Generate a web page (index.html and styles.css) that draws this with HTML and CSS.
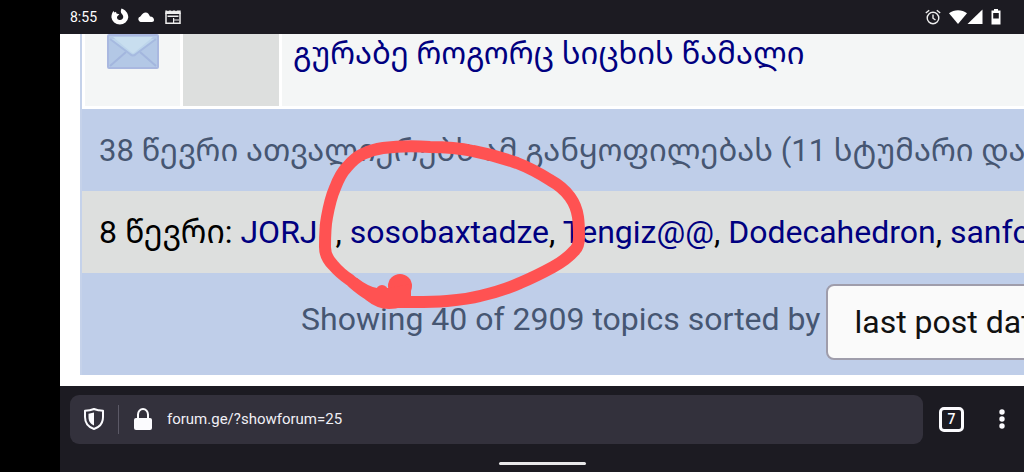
FILE: index.html
```html
<!DOCTYPE html>
<html lang="ka">
  <head>
    <meta charset="UTF-8" />
    <meta name="viewport" content="width=device-width, initial-scale=1.0" />
    <title>forum.ge</title>
    <link rel="stylesheet" href="styles.css">
  </head>
  <body>
    <div class="screen">
      <header class="status-bar">
        <span class="clock">8:55</span>
        <svg class="status-firefox" width="18" height="18" viewBox="0 0 18 18">
          <path fill="#fff" fill-rule="evenodd" d="M10.500 .5C14 1.700 17.300 4.800 17.300 9.300A8.500 8.200 0 0 1 .4 9.300C.4 6.700 1.300 4.500 2.400 3L3.500 4.600L5 3.800L5.500 5.600L8.400 6.300L6.600 8C5.300 9.500 6.300 12 9 12C12.500 12 13.300 8 10.700 5.800C9.600 4.500 9.500 2.500 10.500 .5Z" />
        </svg>
        <svg class="status-cloud" width="18" height="18" viewBox="0 0 18 18">
          <path fill="#fff" d="M3.500 14A3 3 0 0 1 2 9.300C4 9 5 4.500 8.500 4.500C11 4.500 12.300 6.700 13 8.600C17.500 8.600 18.400 14 14.800 14Z" />
        </svg>
        <svg class="status-news" width="16" height="16" viewBox="0 0 16 16">
          <path fill="none" stroke="#eee" stroke-width="1.500" d="M1 3.500V14.200H15V3.500" />
          <path fill="#eee" d="M.3 1.500H2L3 2.300L4 1.500H6L7 2.300L8 1.500H10L11 2.300L12 1.500H15.700V5H.3ZM2.500 6.500H13.500V8H2.500ZM8 9H9.200V14H8ZM9.200 10.500H14V11.600H9.200Z" />
        </svg>
        <span class="spacer"></span>
        <svg class="status-alarm" width="16" height="16" viewBox="0 0 16 16">
          <circle cx="8" cy="9" r="5.800" fill="none" stroke="#eee" stroke-width="1.400" />
          <path fill="none" stroke="#eee" stroke-width="1.400" d="M.8 4L4.200 1.200M15.200 4L11.800 1.200M8 5.500V9.200L10.500 11" />
        </svg>
        <svg class="status-wifi" width="18" height="16" viewBox="0 0 18 16">
          <path fill="#fff" d="M0 4.200C5 .2 13 .2 18 4.200L9 15Z" />
        </svg>
        <svg class="status-signal" width="16" height="16" viewBox="0 0 16 16">
          <path fill="#fff" d="M15.500 .5V15H.5Z" />
        </svg>
        <svg class="status-battery" width="10" height="16" viewBox="0 0 10 16">
          <path fill="#fff" fill-rule="evenodd" d="M3 0H7V1.500H9.500V15.500H.5V1.500H3ZM2.200 4V9.500H7.800V4Z" />
        </svg>
      </header>

      <main class="page">
        <div class="forum">
          <table class="topics">
            <tr>
              <td class="topic-status">
                <svg width="52" height="36" viewBox="0 0 52 36">
                  <rect x="1" y="1" width="50" height="33" rx="1" fill="#b3c8e6" stroke="#a9b8e0" stroke-width="2" />
                  <path fill="none" stroke="#a3b6de" stroke-width="2" d="M3 32L19 18M49 32L33 18" />
                  <path fill="#bdd5eb" stroke="#a6bae0" stroke-width="2" d="M3 5L23 20Q26 23 29 20L49 5" />
                  <path fill="#c8deef" d="M6 3H46L28 18Q26 20 24 18Z" />
                </svg>
              </td>
              <td class="topic-icon"></td>
              <td class="topic-title"><a href="#">გურაბე როგორც სიცხის წამალი</a></td>
            </tr>
          </table>
          <div class="viewers">38 წევრი ათვალიერებს ამ განყოფილებას (11 სტუმარი და</div>
          <div class="members">
            8 წევრი: <a href="#">JORJ1</a>, <a href="#">sosobaxtadze</a>, <a href="#">Tengiz@@</a>, <a href="#">Dodecahedron</a>, <a href="#">sanfo</a>
          </div>
          <form class="sorting">
            <label for="sort">Showing 40 of 2909 topics sorted by</label>
            <select id="sort">
              <option>last post date</option>
            </select>
          </form>
        </div>

        <!-- red pen mark around the member name -->
        <svg class="pen-mark" width="270" height="170" viewBox="0 0 270 170">
          <path fill="none" stroke="#ff5252" stroke-width="12" stroke-linejoin="round" d="M70 156C64 155 60 153 53 149C44 144 40 140 33 134C27 130 21 125 16 119C10 113 8 108 8 101C8 90 8 81 10 71C12 60 14 51 18 42C21 34 24 27 30 21C35 15 39 11 46 8C52 5 58 3 66 2C82 0 98 0 113 1C128 1 142 2 156 5C172 8 186 12 200 17C213 22 222 27 233 34C242 39 248 44 253 51C258 58 260 64 261 71C262 78 262 84 262 91C262 97 261 101 258 104C252 111 245 116 236 121C225 127 215 132 203 137C190 143 176 147 163 150C152 153 141 154 130 155C118 156 107 156 96 156Z" />
          <circle cx="83" cy="140" r="12" fill="#ff5252" />
          <circle cx="65" cy="145" r="6" fill="#ff5252" />
          <path fill="#ff5252" d="M40 132Q52 141 60 142L72 142L94 138L94 156Q86 163 72 163Q60 163 49 154L36 138Z" />
        </svg>
      </main>

      <footer class="browser-bar">
        <div class="toolbar">
          <div class="address">
            <button class="icon-button shield" aria-label="Tracking protection">
              <svg width="20" height="22" viewBox="0 0 20 22">
                <path fill="none" stroke="#fbfbfe" stroke-width="2" stroke-linejoin="round" d="M10 1Q14 2.500 19 2.800V9C19 15 16 19 10 21C4 19 1 15 1 9V2.800Q6 2.500 10 1Z" />
                <path fill="#fbfbfe" d="M10 4.500V17.500C6 15.500 4.500 13 4.500 9V5.700Z" />
              </svg>
            </button>
            <button class="icon-button lock" aria-label="Site information">
              <svg width="18" height="22" viewBox="0 0 18 22">
                <rect x="0" y="10" width="18" height="12" rx="2" fill="#fbfbfe" />
                <path fill="none" stroke="#fbfbfe" stroke-width="2" d="M4 11V6.500A5 5.500 0 0 1 14 6.500V11" />
              </svg>
            </button>
            <input class="url" type="text" aria-label="Address" value="forum.ge/?showforum=25" />
          </div>
          <button class="tabs" aria-label="Open tabs">7</button>
          <button class="icon-button" aria-label="Menu">
            <svg width="6" height="20" viewBox="0 0 6 20">
              <g fill="#fbfbfe">
                <circle cx="3" cy="3" r="2.700" />
                <circle cx="3" cy="10" r="2.700" />
                <circle cx="3" cy="17" r="2.700" />
              </g>
            </svg>
          </button>
        </div>
        <div class="home-handle"></div>
      </footer>
    </div>
  </body>
</html>
```
FILE: styles.css
```css
* {
  box-sizing: border-box;
}

body {
  margin: 0;
  background: #000;
  font-family: Roboto, "Noto Sans Georgian", "Noto Sans", "DejaVu Sans", sans-serif;
  overflow: hidden;
}

a {
  color: #000080;
  text-decoration: none;
}

button {
  font-family: inherit;
  cursor: pointer;
}

.screen {
  display: flex;
  flex-direction: column;
  min-height: 100vh;
  margin-left: 60px;
  background: #1c1b22;
}

.status-bar {
  display: flex;
  align-items: center;
  height: 34px;
  padding: 0 23px 0 10px;
  color: #fff;
}

.clock {
  width: 41px;
  font-size: 14px;
}

.status-cloud {
  margin-left: 8px;
}

.status-news {
  margin-left: 10px;
}

.spacer {
  flex: 1;
}

.status-wifi {
  margin-left: 8px;
}

.status-battery {
  margin-left: 8px;
}

.page {
  position: relative;
  padding: 0 0 11px 20px;
  background: #fff;
  overflow: hidden;
}

.forum {
  border-left: 2px solid #c5d2ea;
  font-size: 32px;
  line-height: 38px;
  white-space: nowrap;
}

.topics {
  width: 100%;
  table-layout: fixed;
  border-collapse: collapse;
}

.topics td {
  height: 73px;
  padding: 0;
  vertical-align: top;
  background: #f4f6f6;
  border: 3px solid #fff;
  border-top: 0;
  border-right: 0;
}

.topics .topic-status {
  width: 98px;
  text-align: center;
}

.topic-status svg {
  display: block;
  margin: 0 auto;
}

.topics .topic-icon {
  width: 99px;
  background: #dddfde;
}

.topics .topic-title {
  padding-left: 11px;
  font-size: 31px;
  line-height: 40px;
}

.viewers,
.members {
  padding: 22px 0 22px 17px;
}

.viewers {
  padding-bottom: 20px;
  background: #bfcee9;
  color: #465672;
  font-size: 31px;
  line-height: 40px;
}

.members {
  background: #dddfde;
  color: #000;
}

.sorting {
  display: flex;
  align-items: center;
  gap: 6px;
  padding: 11px 0 15px 219px;
  background: #bfcee9;
  color: #465672;
}

.sorting label {
  padding-bottom: 6px;
}

.sorting select {
  flex: none;
  width: 280px;
  height: 76px;
  padding: 0 26px;
  appearance: none;
  border: 2px solid #9f9dab;
  border-radius: 8px;
  background: #fafafa;
  color: #111;
  font: inherit;
}

.pen-mark {
  position: absolute;
  top: 112px;
  left: 257px;
  overflow: visible;
  pointer-events: none;
}

.browser-bar {
  display: flex;
  flex: 1;
  flex-direction: column;
  justify-content: space-between;
  padding: 9px 0 7px;
}

.toolbar {
  display: flex;
  align-items: center;
  padding: 0 19px 0 10px;
}

.address {
  display: flex;
  flex: 1;
  align-items: center;
  height: 49px;
  margin-right: 16px;
  padding-left: 14px;
  border-radius: 9px;
  background: #33313c;
}

.icon-button {
  display: flex;
  padding: 0;
  border: 0;
  background: none;
}

.shield {
  align-items: center;
  height: 29px;
  padding-right: 14px;
  border-right: 1px solid #5b5966;
}

.lock {
  margin: 0 15px;
}

.url {
  flex: 1;
  padding: 0;
  border: 0;
  background: none;
  color: #f0eff5;
  font: 15px Roboto, sans-serif;
}

.tabs {
  width: 25px;
  height: 25px;
  margin-right: 35px;
  padding: 0;
  border: 3px solid #fbfbfe;
  border-radius: 5px;
  background: none;
  color: #fbfbfe;
  font-size: 14px;
  font-weight: 500;
}

.home-handle {
  width: 87px;
  height: 3px;
  margin: 0 auto;
  border-radius: 2px;
  background: #e8e8ea;
}
```
